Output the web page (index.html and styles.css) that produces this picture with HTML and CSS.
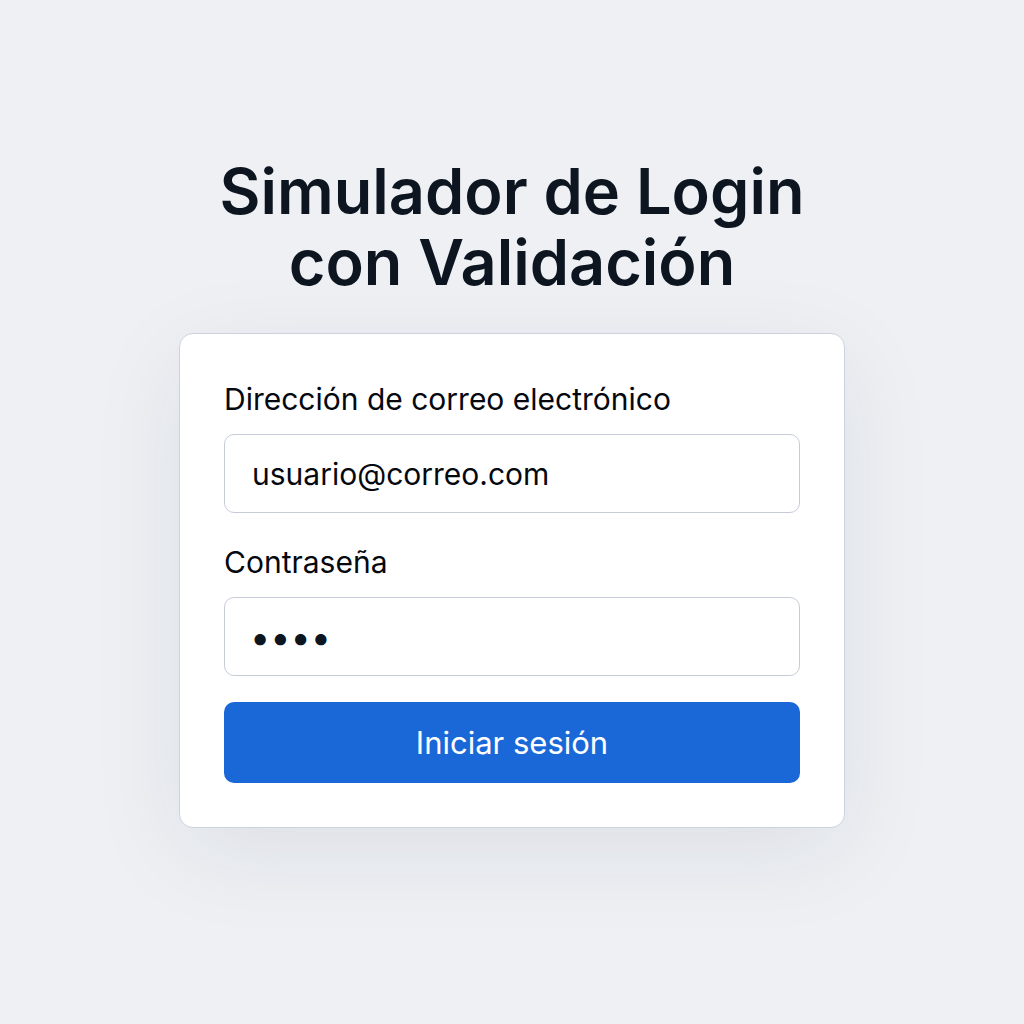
FILE: index.html
```html
<!DOCTYPE html>
<html lang="es">
<head>
<meta charset="utf-8">
<meta name="viewport" content="width=device-width, initial-scale=1">
<title>Simulador de Login con Validación</title>
<link rel="stylesheet" href="styles.css">
</head>
<body>
<main class="page">
  <h1 class="title">Simulador de Login con Validación</h1>
  <form class="card">
    <div class="field">
      <label class="label" for="email">Dirección de correo electrónico</label>
      <input class="input" id="email" type="email" value="usuario@correo.com">
    </div>
    <div class="field">
      <label class="label" for="password">Contraseña</label>
      <input class="input password" id="password" type="password" value="1234">
    </div>
    <button class="button" type="submit">Iniciar sesión</button>
  </form>
</main>
</body>
</html>
```

FILE: styles.css
```css
* {
  box-sizing: border-box;
}

body {
  margin: 0;
  background: #eef0f4;
  color: #0d1620;
  font-family: Inter, "Liberation Sans", sans-serif;
}

.page {
  display: flex;
  flex-direction: column;
  align-items: center;
  justify-content: center;
  gap: 35px;
  min-height: 100vh;
  padding: 128px 24px 168px;
}

.title {
  max-width: 640px;
  margin: 0;
  font-size: 63px;
  font-weight: 600;
  line-height: 71px;
  text-align: center;
}

.card {
  display: flex;
  flex-direction: column;
  gap: 26px;
  width: 100%;
  max-width: 666px;
  padding: 42px 44px 44px;
  border: 1px solid #cbd3df;
  border-radius: 14px;
  background: #fff;
  box-shadow: 0 24px 96px rgba(30, 42, 55, 0.08);
}

.field {
  display: flex;
  flex-direction: column;
  gap: 12px;
}

.label {
  color: #05080f;
  font-size: 30px;
  line-height: 46px;
}

.input {
  width: 100%;
  height: 79px;
  margin: 0;
  padding: 0 27px;
  border: 1px solid #c6ccd7;
  border-radius: 10px;
  background: #fff;
  color: #05080f;
  font-family: inherit;
  font-size: 30px;
}

.password {
  padding: 0 25px;
  color: #0d1620;
  font-size: 36px;
}

.button {
  height: 81px;
  border: 0;
  border-radius: 10px;
  background: #1a68d8;
  color: #fff;
  font-family: inherit;
  font-size: 31px;
}
```
